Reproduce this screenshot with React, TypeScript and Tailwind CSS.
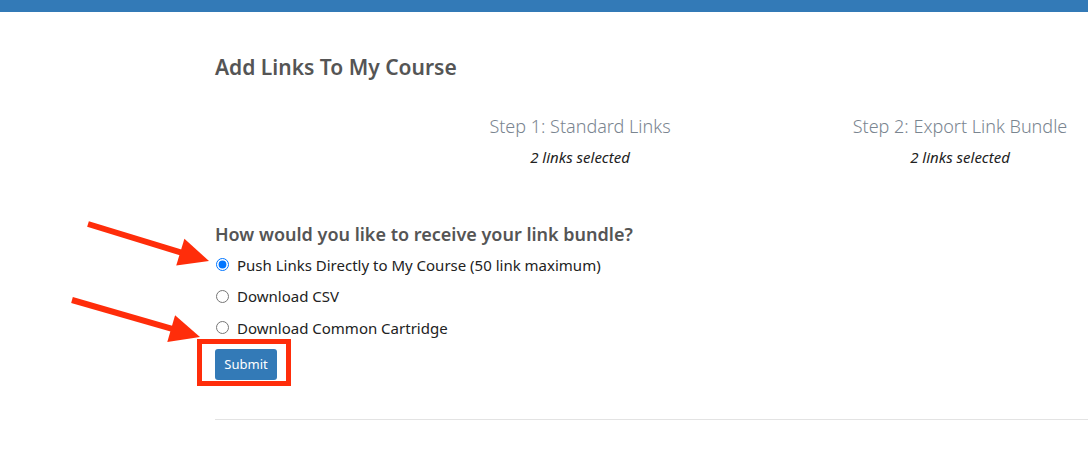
import * as React from "react";

const font = { fontFamily: '"Noto Sans", "Open Sans", sans-serif' };

function Arrow({ x1, y1, x2, y2 }: { x1: number; y1: number; x2: number; y2: number }) {
  const dx = x2 - x1;
  const dy = y2 - y1;
  const len = Math.hypot(dx, dy);
  const ux = dx / len;
  const uy = dy / len;
  const headLen = 30;
  const headW = 14;
  const bx = x2 - ux * headLen;
  const by = y2 - uy * headLen;
  const p1 = `${bx - uy * headW},${by + ux * headW}`;
  const p2 = `${bx + uy * headW},${by - ux * headW}`;
  return (
    <g>
      <line x1={x1} y1={y1} x2={bx + ux * 2} y2={by + uy * 2} stroke="#ff2d0a" strokeWidth={6} />
      <polygon points={`${x2},${y2} ${p1} ${p2}`} fill="#ff2d0a" />
    </g>
  );
}

export default function App() {
  const [choice, setChoice] = React.useState("push");
  const options = [
    { id: "push", label: "Push Links Directly to My Course (50 link maximum)" },
    { id: "csv", label: "Download CSV" },
    { id: "cc", label: "Download Common Cartridge" },
  ];

  return (
    <div className="relative h-[456px] w-[1088px] overflow-hidden bg-white" style={font}>
      <div className="h-[12px] bg-[#337ab7]" />

      <div className="pl-[215px]">
        <h1 className="mt-[41px] text-[21px] font-semibold leading-[28px] text-[#555]">
          Add Links To My Course
        </h1>

        <div className="ml-[175px] mt-[32px] flex w-[760px]">
          {["Step 1: Standard Links", "Step 2: Export Link Bundle"].map((step) => (
            <div key={step} className="w-[380px] shrink-0 text-center">
              <div className="text-[18px] font-light leading-[26px] text-[#7a8590]">{step}</div>
              <div className="mt-[8px] text-[15px] italic leading-[20px] text-[#222]">
                2 links selected
              </div>
            </div>
          ))}
        </div>

        <h2 className="mt-[55px] text-[18px] font-semibold leading-[24px] text-[#555]">
          How would you like to receive your link bundle?
        </h2>

        <div className="mt-[3px] flex flex-col">
          {options.map((o) => (
            <label key={o.id} className="flex h-[31.5px] items-center gap-[8px] text-[15px] text-[#222]">
              <input
                type="radio"
                name="bundle"
                checked={choice === o.id}
                onChange={() => setChoice(o.id)}
                className="m-0 ml-[1px] h-[13px] w-[13px] accent-[#0075ff]"
              />
              <span>{o.label}</span>
            </label>
          ))}
        </div>

        <div className="-ml-[18px] -mt-[4.5px] w-fit border-[5px] border-[#ff2d0a] pb-[1px] pl-[13px] pr-[9px] pt-[5px]">
          <button className="h-[31px] w-[62px] rounded-[3px] bg-[#337ab7] text-[13px] text-white">
            Submit
          </button>
        </div>

        <div className="mt-[33px] h-px bg-[#e3e3e3]" />
      </div>

      <svg className="pointer-events-none absolute left-0 top-0" width={1088} height={456}>
        <Arrow x1={88} y1={224} x2={209} y2={261} />
        <Arrow x1={72} y1={300} x2={200} y2={337} />
      </svg>
    </div>
  );
}
